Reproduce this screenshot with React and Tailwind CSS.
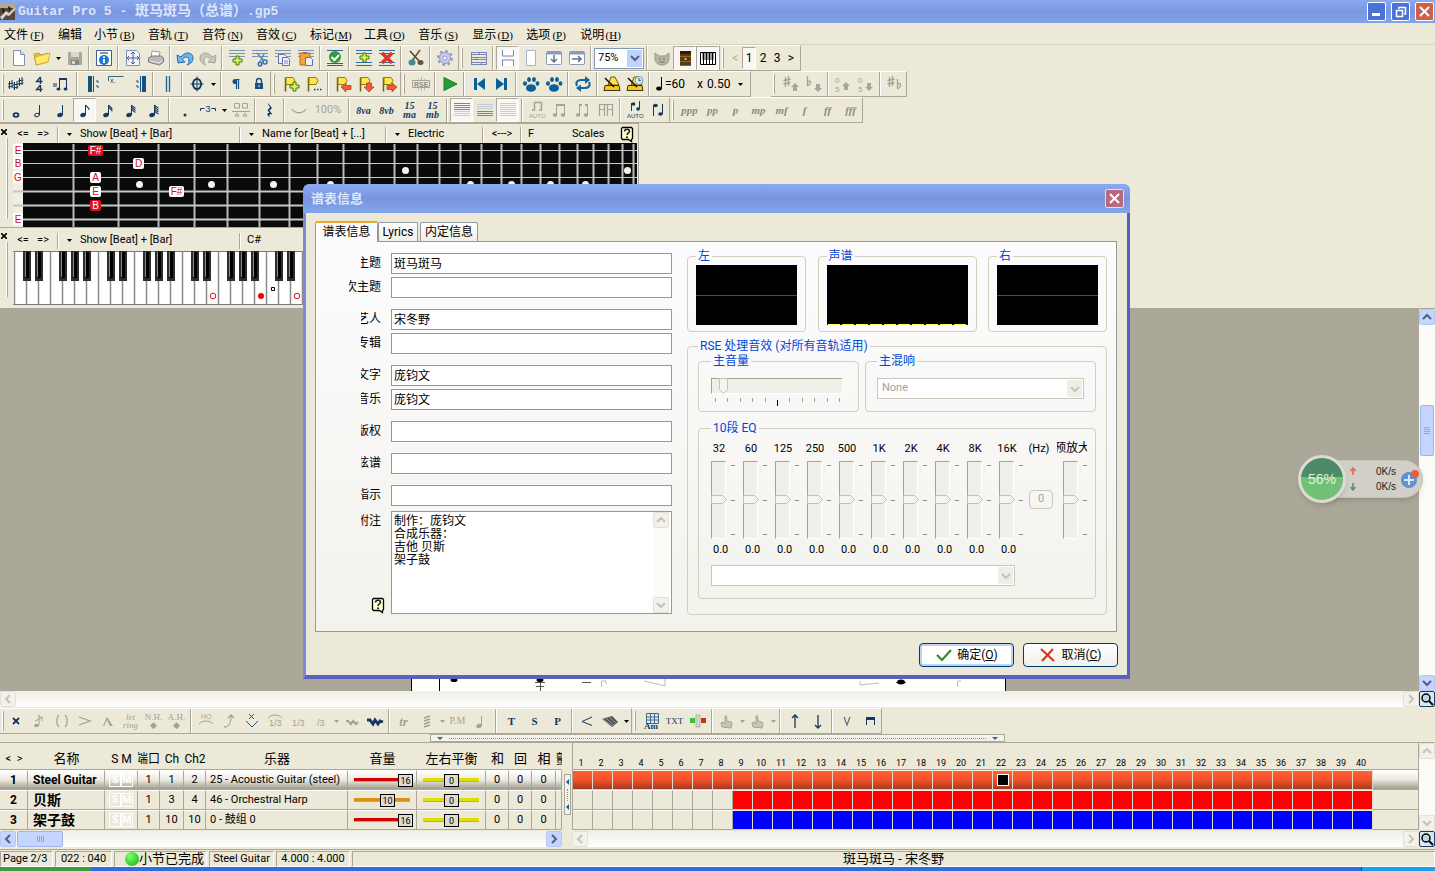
import React from "react";

const NAVY = "#12395f";
const GRAY = "#a5a294";

// ---------- toolbar icons ----------

function Svg({ children, w = 18, className = "" }) {
  return (
    <svg width={w} height="18" viewBox={`0 0 ${w} 18`} fill="none" className={className} aria-hidden="true">
      {children}
    </svg>
  );
}

const note = (flags, color = NAVY, hollow = false) => (
  <Svg>
    <ellipse cx="7" cy="14" rx="2.300" ry="1.700" transform="rotate(-20 7 14)" fill={hollow ? "none" : color} stroke={color} />
    <path d="M9.500 14V4" stroke={color} />
    {Array.from({ length: flags }, (_, i) => (
      <path key={i} d={`M9.500 ${4 + i * 2}c1 2 4 2.500 3.500 ${5.5 - flags * 0.6}`} stroke={color} strokeWidth="1.200" />
    ))}
  </Svg>
);

const beam = (color, top = "M5 3h9v2H5z") => (
  <Svg>
    <path d={top} fill={color} />
    <path d="M5.500 4v10M13.500 4v10" stroke={color} />
    <ellipse cx="4" cy="14" rx="2.200" ry="1.700" fill={color} />
    <ellipse cx="12" cy="14" rx="2.200" ry="1.700" fill={color} />
  </Svg>
);

const staff = (ys, color = "#7c93b5") => ys.map((y) => <path key={y} d={`M1 ${y}.5h16`} stroke={color} />);

const plus = (x, y) => (
  <path
    d={`M${x + 3} ${y}h3v3h3v3h-3v3h-3v-3h-3v-3h3z`}
    fill="#d9f25c"
    stroke="#3c7a12"
  />
);

const flag = (
  <>
    <path d="M3.500 16.500V2.500" stroke="#6b5f10" strokeWidth="1.500" />
    <path d="M4 2.500h7l2 3-2 4H4z" fill="#ffe94a" stroke="#8d7a10" />
  </>
);

const txt = (s, cls = "text-[#12395f]") => <span className={`font-['Liberation_Serif',serif] leading-none ${cls}`}>{s}</span>;
const dyn = (s) => txt(s, "text-[#8f8c80] text-[11px] font-bold italic");
const ital = (a, b) => (
  <span className="font-['Liberation_Serif',serif] text-[10px] font-bold italic leading-[9px] text-[#12395f] text-center">
    {a}
    {b && <br />}
    {b}
  </span>
);
const small = (a, b) => (
  <span className="font-['Liberation_Serif',serif] text-[9px] leading-[8px] text-[#a5a294] text-center">
    {a}
    <br />
    {b}
  </span>
);

const paw = (
  <Svg>
    <ellipse cx="9" cy="13" rx="5" ry="3.800" fill="#0b5f98" />
    <ellipse cx="3" cy="8.500" rx="2" ry="2.300" fill="#0b5f98" />
    <ellipse cx="7" cy="4.500" rx="1.900" ry="2.500" fill="#0b5f98" />
    <ellipse cx="12" cy="4.500" rx="1.900" ry="2.500" fill="#0b5f98" />
    <ellipse cx="15.500" cy="8.500" rx="1.900" ry="2.300" fill="#0b5f98" />
  </Svg>
);

const hand = (
  <Svg>
    <path d="M4 15l-1-4 2-1 2 2V4l1.500 0 .5 5 4 1 1 2-1 4z" fill="#c9c6b8" stroke={GRAY} />
  </Svg>
);

const metronome = (clock) => (
  <Svg>
    <path d="M5 10L8 2h4l4 8z" fill="#ffe14a" stroke="#6b5a08" />
    <path d="M2 10.500h14l1 5H1z" fill="#f6c81d" stroke="#3a3204" />
    <path d="M2 3l9 9" stroke="#111" strokeWidth="1.500" />
    {clock && <circle cx="13" cy="5.500" r="4" fill="#dcecf8" stroke="#6c93b4" />}
    {clock && <path d="M13 3v3l2-1" stroke="#356" />}
  </Svg>
);

const lines = (dark, light) => (
  <Svg>
    {staff(dark, "#6f86ad")}
    {staff(light, "#c8ccd4")}
  </Svg>
);

const windowIcon = (arrow) => (
  <Svg>
    <rect x="1.500" y="2.500" width="15" height="13" rx="1" fill="#fff" stroke="#8d98bd" />
    <path d="M2 4h14" stroke="#8d98bd" strokeWidth="3" />
    <path d={arrow} stroke="#5f7199" strokeWidth="1.500" />
  </Svg>
);

const barline = (side) => (
  <Svg>
    <path d={side === "l" ? "M4 1h4v16H4z" : "M12 1h4v16h-4z"} fill="#15517e" />
    <path d={side === "l" ? "M9.500 1v16M12 6h2v2M12 11h2v2" : "M10.500 1v16M6 6h2v2M6 11h2v2"} stroke="#15517e" />
  </Svg>
);

const rest = (
  <Svg>
    <path d="M7 2l4 5-2.500 2.500 3 4c-3-1-4.500 0-2 3-4-2-4-5-1-4.500L6.500 9 9 6.500 7 3z" fill={NAVY} />
  </Svg>
);

const SHARP = "M3.500 2v10M6.500 1v10M1.500 5.500l7-1.500M1.500 9l7-1.500";
const FLAT = "M2.500 1v10M2.500 7c3-2 5 0 0 4";

const shift = (sign, up) => (
  <Svg>
    <path d={sign} stroke={GRAY} strokeWidth="1.300" />
    <path d={up ? "M13 8l4 4h-2v4h-4v-4H9z" : "M13 17l4-4h-2V9h-4v4H9z"} fill="#aaa799" />
  </Svg>
);

const octave = (up) => (
  <Svg>
    <text x="1" y="8" fontSize="8" fill={GRAY} fontFamily="Liberation Sans">0</text>
    <text x="1" y="17" fontSize="8" fill={GRAY} fontFamily="Liberation Sans">5</text>
    <path d={up ? "M12 7l4 4h-2v4h-4v-4H8z" : "M12 16l4-4h-2V8h-4v4H8z"} fill="#aaa799" />
  </Svg>
);

const flagArrow = (d) => (
  <Svg>
    {flag}
    <path d={d} fill="#f25a3c" stroke="#b53018" strokeWidth=".7" />
  </Svg>
);

const icons = {
  new: <Svg><path d="M3.500 1.500h7l4 4v11h-11z" fill="#fff" stroke="#7d8fb8" /><path d="M10.500 1.500v4h4" stroke="#7d8fb8" fill="#dfe6f5" /></Svg>,
  open: <Svg><path d="M1 5l5-1 2 2 7-2v9L3 16z" fill="#e8c530" stroke="#b8962a" strokeWidth=".8" /><path d="M2 8l15-4-2 9-12 3z" fill="#ffe96b" stroke="#c7a52e" strokeWidth=".8" /></Svg>,
  save: <Svg><path d="M2 3h13l1 1v12H2z" fill="#aba99d" /><path d="M5 3h8v5H5z" fill="#dad8cc" /><path d="M5 11h8v5H5z" fill="#88867c" /><path d="M6 12h3v3H6z" fill="#dad8cc" /></Svg>,
  info: <Svg><path d="M1.500 1.500h15v15h-15z" fill="#fff" stroke="#3b5f96" /><path d="M5 4h8" stroke="#222" /><circle cx="9" cy="11" r="5" fill="#1677d8" /><path d="M9 10v4M9 7.500v1.500" stroke="#fff" strokeWidth="2" /></Svg>,
  move: <Svg><path d="M2.500 1.500h10l3 3v12h-13z" fill="#f4f6fc" stroke="#7d8fb8" /><path d="M9 4v10M4 9h10M7 5l2-2 2 2M7 13l2 2 2-2M5 7L3 9l2 2M13 7l2 2-2 2" stroke="#48628f" /></Svg>,
  print: <Svg><path d="M5 2l8 1-1 6H4z" fill="#fff" stroke="#999" /><path d="M1.500 9l4-2h9l2 2v4l-4 3-11-3z" fill="#b8b9c0" stroke="#77787e" /><path d="M3 12l9 2 3-2" stroke="#eee" /></Svg>,
  undo: <Svg><path d="M1 6l1 8 7-1-2.500-2.500C9 7 13 7 13 12c0 2-1 3-2 4 4-1 6-4 6-7 0-6-8-7-12-1z" fill="#6fb2ee" stroke="#1f6db4" /></Svg>,
  redo: <Svg><path d="M17 6l-1 8-7-1 2.500-2.500C9 7 5 7 5 12c0 2 1 3 2 4-4-1-6-4-6-7 0-6 8-7 12-1z" fill="#c9c7bb" stroke="#a9a79b" /></Svg>,
  addBar: <Svg>{staff([1, 4, 7])}{plus(5, 7)}</Svg>,
  cutBar: <Svg>{staff([1, 4, 7])}<path d="M6 4l7 8M13 5l-4 8" stroke="#5a89c4" strokeWidth="1.500" /><circle cx="14" cy="13" r="2" stroke="#2f6db5" strokeWidth="1.500" /><circle cx="9" cy="15" r="1.800" stroke="#2f6db5" strokeWidth="1.500" /></Svg>,
  copyBar: <Svg>{staff([1, 4, 7])}<path d="M4.500 5.500h6l2 2v7h-8z" fill="#eef1fa" stroke="#5f70ab" /><path d="M8.500 8.500h5l2 2v6h-7z" fill="#eef1fa" stroke="#5f70ab" /><path d="M10 12h4M10 14h4" stroke="#7b8cc0" /></Svg>,
  pasteBar: <Svg>{staff([1, 4, 7])}<path d="M3 4h10v12H3z" fill="#f2a040" stroke="#c06f17" /><path d="M6 3h4v2H6z" fill="#777" /><path d="M8.500 8.500h5l2 2v6h-7z" fill="#eef1fa" stroke="#5f70ab" /></Svg>,
  check: <Svg>{staff([1, 14, 16], "#2b5e9e")}<circle cx="9" cy="8" r="6" fill="#2f9b3a" /><path d="M5.500 8l3 3 4.500-5" stroke="#fff" strokeWidth="2" /></Svg>,
  insTrack: <Svg>{staff([1, 4, 13, 16], "#2f6ca4")}{plus(5, 4)}</Svg>,
  delTrack: <Svg>{staff([1, 4, 13, 16], "#2f6ca4")}<path d="M4 4l10 10M14 4L4 14" stroke="#df3324" strokeWidth="3.500" /></Svg>,
  instr: <Svg><path d="M3 2l10 11" stroke="#444" strokeWidth="1.500" /><path d="M13 1L5 12" stroke="#6b4a38" strokeWidth="1.500" /><ellipse cx="5" cy="13.500" rx="3.500" ry="3" fill="#3f8d96" /><ellipse cx="13.500" cy="13.500" rx="3" ry="2.500" fill="#6a5045" /></Svg>,
  gear: <Svg><circle cx="9" cy="9" r="5.500" fill="#c6cdea" stroke="#8d98c9" /><circle cx="9" cy="9" r="7" stroke="#8d98c9" strokeWidth="2" strokeDasharray="2.700 2.800" /><circle cx="9" cy="9" r="2" fill="#fff" stroke="#8d98c9" /></Svg>,
  multi: <Svg>{staff([3, 5, 8, 10, 13, 15], "#7787b4")}<path d="M1.500 3v13M16.500 3v13M9.500 3v3M6.500 8v3M11.500 13v3" stroke="#7787b4" /></Svg>,
  pages: <Svg><path d="M3.500 1v6h11V1M3.500 17v-6h11v6" fill="#fff" stroke="#7787b4" /></Svg>,
  page: <Svg><path d="M4.500 1.500h9v15h-9z" fill="#fff" stroke="#a6b0cf" /></Svg>,
  winDown: windowIcon("M9 6v7M6 10l3 3 3-3"),
  winRight: windowIcon("M4 10h9M10 7l3 3-3 3"),
  mask: <Svg><path d="M2 4l4 3h6l4-3v6c0 8-14 8-14 0z" fill="#b9b6a8" stroke="#9b988b" /><path d="M6 10h2M10 10h2M6 13h6" stroke="#77756a" /></Svg>,
  fret: <Svg><path d="M4 2h11v15H4z" fill="#5b3a12" /><path d="M4 7.500h11M4 12.500h11M4 16.500h11" stroke="#8f6524" /><path d="M4 2h11v3H4z" fill="#2f1c06" /><circle cx="9.500" cy="10" r="1" fill="#e6d9b0" /></Svg>,
  keys: <Svg><path d="M1.500 3.500h15v12h-15z" fill="#fff" stroke="#000" /><path d="M4.500 11v4M7.500 11v4M10.500 11v4M13.500 11v4" stroke="#000" /><path d="M4.500 4v7M7.500 4v7M10.500 4v7M13.500 4v7" stroke="#000" strokeWidth="1.800" /></Svg>,

  sharps: <Svg>{[[1, 6], [6, 7], [11, 3]].map(([x, y]) => <path key={x} d={`M${x + 1.5} ${y}v8M${x + 4} ${y - 1}v8M${x} ${y + 3}l5.500-1M${x} ${y + 6}l5.500-1`} stroke={NAVY} />)}</Svg>,
  sig: <Svg><path d="M10.500 2v7M10.500 2L6.500 6.500h6M10.500 10v7M10.500 10l-4 4.500h6" stroke={NAVY} strokeWidth="1.300" /></Svg>,
  triplet: <Svg><path d="M0 9h4M0 11h4" stroke={NAVY} /><path d="M6 3h8v2H6z" fill={NAVY} /><path d="M6.500 4v10M13.500 4v10" stroke={NAVY} /><ellipse cx="5.500" cy="14" rx="2" ry="1.600" fill={NAVY} /><ellipse cx="12.500" cy="14" rx="2" ry="1.600" fill={NAVY} /></Svg>,
  repL: barline("l"),
  alt: <Svg><path d="M1.500 6V1.500h15" stroke="#2a6a72" /><text x="3" y="8" fontSize="7" fill={NAVY} fontFamily="Liberation Sans">x.</text></Svg>,
  repR: barline("r"),
  dbl: <Svg><path d="M7.500 1v16M10.500 1v16" stroke="#15629a" strokeWidth="1.300" /></Svg>,
  coda: <Svg><ellipse cx="9" cy="9" rx="4" ry="5" stroke={NAVY} strokeWidth="2" /><path d="M9 1.500v15M2.500 9h13" stroke={NAVY} /></Svg>,
  para: <Svg><path d="M12.500 4.500H8M9.500 5v9M11.500 5v9" stroke="#15517e" strokeWidth="1.200" /><path d="M8 4a2.500 2.500 0 000 5h2V4z" fill="#15517e" /></Svg>,
  lock: <Svg><rect x="5" y="8" width="8" height="6" fill="#15517e" /><path d="M6.500 8V6a2.500 2.500 0 015 0v2" stroke="#15517e" strokeWidth="1.400" /><path d="M9 10v2" stroke="#fff" /></Svg>,
  flagAdd: <Svg>{flag}{plus(8, 7)}</Svg>,
  flagDots: <Svg>{flag}<path d="M9 14.500h1.500M12 14.500h1.500M15 14.500h1.500" stroke="#333" strokeWidth="1.500" /></Svg>,
  flagL: flagArrow("M7 12l5-4v2.500h5v4h-5V17z"),
  flagD: flagArrow("M12 17l-5-5h2.500V8h5v4H17z"),
  flagR: flagArrow("M17 12l-5-4v2.500H7v4h5V17z"),
  rse: <Svg><path d="M9.500 2v14M6.500 4v11M12.500 4v11M3.500 6v7M15.500 6v7" stroke="#b9b6a8" /><path d="M.5 5.500h17v7H.5z" fill="#ece9d8" stroke={GRAY} /><text x="2" y="11.500" fontSize="7" fontWeight="bold" fill="#8f8c80" fontFamily="Liberation Sans">RSE</text></Svg>,
  play: <Svg><path d="M3 2.500v13L16 9z" fill="#259b35" stroke="#1a7a28" /></Svg>,
  first: <Svg><path d="M4 3h3v12H4zM15 3v12L7 9z" fill="#0b5f98" /></Svg>,
  last: <Svg><path d="M11 3h3v12h-3zM3 3v12l8-6z" fill="#0b5f98" /></Svg>,
  paw,
  paw2: paw,
  loop: <Svg><path d="M3 11c-2-4 1-6 4-6h6M15 7c2 4-1 6-4 6H5" stroke="#16649f" strokeWidth="2" /><path d="M11 1l5 4-5 4zM7 9.500L2 13l5 4z" fill="#16649f" /></Svg>,
  metro: metronome(false),
  metro2: metronome(true),
  upS: shift(SHARP, true),
  dnB: shift(FLAT, false),
  oct1: octave(true),
  oct2: octave(false),
  shfl: <Svg><path d={SHARP} stroke={GRAY} strokeWidth="1.300" /><path d="M11.500 4v10M11.500 9c3-2 5 1 0 5" stroke={GRAY} strokeWidth="1.300" /></Svg>,

  whole: <Svg><ellipse cx="9" cy="14" rx="2.500" ry="1.800" stroke={NAVY} strokeWidth="1.800" /></Svg>,
  half: note(0, NAVY, true),
  quarter: note(0),
  eighth: note(1),
  n16: note(2),
  n32: note(3),
  n64: note(4),
  dot: <Svg><circle cx="9" cy="14" r="1.500" fill={NAVY} /></Svg>,
  tri: <Svg><path d="M1.500 10V7.500h4M12.500 7.500h4V10" stroke={NAVY} /><text x="6.500" y="11" fontSize="9" fill={NAVY} fontFamily="Liberation Sans">3</text></Svg>,
  tie3: <Svg><path d="M2.500 7V2.500h5V7zM10.500 7V2.500h5V7zM0 10.500h18M3 15l2-3 2 3zM11 15l2-3 2 3z" stroke={GRAY} /></Svg>,
  rest,
  slur: <Svg><path d="M2 8c3 5 11 5 14 0" stroke={GRAY} strokeWidth="1.300" /></Svg>,
  "8va": ital("8va"),
  "8vb": ital("8vb"),
  "15ma": ital("15", "ma"),
  "15mb": ital("15", "mb"),
  v1: lines([2, 4, 6, 8], [10, 12, 14]),
  v2: lines([10, 12, 14], [3, 5, 7]),
  v3: lines([], [2, 4, 6, 8, 10, 12, 14]),
  beamA: <Svg><path d="M6 1.500h8M6.500 2v7M13.500 2v7M4 9h3M11 9h3" stroke={GRAY} strokeWidth="1.500" /><text x="1" y="17" fontSize="6" fill={GRAY} fontFamily="Liberation Sans">AUTO</text></Svg>,
  beamB: beam(GRAY),
  beamC: beam(GRAY, "M5 3h3v2H5zM11 3h3v2h-3z"),
  beamD: <Svg><path d="M2 3.500h14M2.500 3v12M7.500 3v12M10.500 3v12M15.500 3v12M2 8.500h6M10 8.500h6" stroke={GRAY} strokeWidth="1.200" /></Svg>,
  stemA: <Svg><path d="M5.500 2v8M13.500 0v8M5.500 2.500h3" stroke={NAVY} /><circle cx="7.500" cy="3" r="1.800" fill={NAVY} /><circle cx="12" cy="8" r="1.800" fill={NAVY} /><text x="1" y="17" fontSize="6" fill={NAVY} fontFamily="Liberation Sans">AUTO</text></Svg>,
  stemB: <Svg><path d="M4.500 4v11M13.500 3v10" stroke={NAVY} /><ellipse cx="6.500" cy="4.500" rx="2.300" ry="1.700" fill={NAVY} /><ellipse cx="11.500" cy="13" rx="2.300" ry="1.700" fill={NAVY} /></Svg>,
  ppp: dyn("ppp"), pp: dyn("pp"), p: dyn("p"), mp: dyn("mp"), mf: dyn("mf"), f: dyn("f"), ff: dyn("ff"), fff: dyn("fff"),

  dead: <Svg><path d="M6 6l6 6M12 6l-6 6" stroke={NAVY} strokeWidth="1.800" /></Svg>,
  grace: <Svg><ellipse cx="6.500" cy="13.500" rx="2.500" ry="1.800" fill={GRAY} /><path d="M9 13V3c1 3 4 3 3 6M5 9l8-4" stroke={GRAY} /></Svg>,
  ghost: <Svg><path d="M6 3c-3 3-3 9 0 12M12 3c3 3 3 9 0 12" stroke={GRAY} strokeWidth="1.300" /></Svg>,
  accent: <Svg><path d="M3 5l11 4-11 4" stroke={GRAY} strokeWidth="1.300" /></Svg>,
  heavy: <Svg><path d="M4 14L8 5l6 9h-3L8 8l-3 6z" fill={GRAY} /></Svg>,
  ring: <span className="font-['Liberation_Serif',serif] text-[9px] italic leading-[8px] text-[#a5a294] text-center">let<br />ring</span>,
  nh: small("N.H.", "◆"),
  ah: small("A.H.", "◆"),
  ho: <Svg><text x="4" y="7" fontSize="7" fill={GRAY} fontFamily="Liberation Sans">HO</text><path d="M2 12c3-4 11-4 14 0" stroke={GRAY} /></Svg>,
  bend: <Svg><path d="M4 15c5 0 7-3 7-11M8 6l3-3 3 3" stroke={GRAY} strokeWidth="1.300" /></Svg>,
  trem: <Svg><path d="M3 9l6 6 6-6M6 2l5 5M11 2L6 7" stroke="#1d5687" /></Svg>,
  sl1: <Svg><path d="M2 6c3-4 11-4 14 0" stroke={GRAY} /><text x="3" y="14" fontSize="9" fill={GRAY} fontFamily="Liberation Sans">1/3</text></Svg>,
  sl2: <Svg><text x="3" y="14" fontSize="9" fill={GRAY} fontFamily="Liberation Sans">1/3</text></Svg>,
  sl3: <Svg><text x="5" y="14" fontSize="9" fill={GRAY} fontFamily="Liberation Sans">/3</text></Svg>,
  vib: <Svg><path d="M3 9l2 0 3 3 2-3 3 3 2-2" stroke={GRAY} strokeWidth="2.200" /></Svg>,
  vib2: <Svg><path d="M1 8l3 0 3 4 2-4 3 4 2-3 3 1" stroke={NAVY} strokeWidth="2.800" /></Svg>,
  tr: txt("tr", "text-[#a5a294] text-[13px] font-bold italic"),
  trpk: <Svg><path d="M6 6l6-2M6 9l6-2M6 12l6-2M6 15l6-2" stroke={GRAY} strokeWidth="1.800" /></Svg>,
  pm: txt("P.M", "text-[#a5a294] text-[10px]"),
  stac: note(0, GRAY),
  T: txt("T", "text-[#12395f] text-[11px] font-bold"),
  S: txt("S", "text-[#12395f] text-[11px] font-bold"),
  P: txt("P", "text-[#12395f] text-[11px] font-bold"),
  fade: <Svg><path d="M14 5L4 9.500l10 4" stroke={NAVY} /></Svg>,
  wah: <Svg><path d="M1 7l10-3 6 6-6 5z" fill="#4c5058" /><path d="M2 7l9 7M5 6l8 7M8 5l7 6" stroke="#9a9fa8" /></Svg>,
  chord: <Svg><path d="M3.500 1.500h12v10h-12zM3 5h13M3 8h13M7.500 2v9M11.500 2v9" stroke="#3c6a97" /><text x="1" y="17" fontSize="9" fontWeight="bold" fill={NAVY} fontFamily="Liberation Serif">Am</text></Svg>,
  TXT: txt("TXT", "text-[#12395f] text-[9px]"),
  mix: <Svg><path d="M1 6h5v5H1z" fill="#35c435" /><path d="M12 6h5v5h-5z" fill="#c33418" /><path d="M7 3h4v12H7z" fill="#d9d6c8" stroke="#999" strokeWidth=".6" /></Svg>,
  hand1: hand,
  hand2: hand,
  up: <Svg><path d="M9 16V3M6 6l3-3 3 3" stroke={NAVY} strokeWidth="1.300" /></Svg>,
  down: <Svg><path d="M9 3v13M6 13l3 3 3-3" stroke={NAVY} strokeWidth="1.300" /></Svg>,
  pickU: <Svg><path d="M6 5l3 8 3-8" stroke="#54708c" strokeWidth="1.200" /></Svg>,
  pickD: <Svg><path d="M5.500 13V6h8v7" stroke={NAVY} /><path d="M5 5h9v3H5z" fill={NAVY} /></Svg>,
};

function Caret({ gray }) {
  return (
    <svg width="5" height="3" viewBox="0 0 5 3" aria-hidden="true">
      <path d="M0 0h5L2.500 3z" fill={gray ? GRAY : "#000"} />
    </svg>
  );
}

// "|" and "||" are separators, "v" / "vg" drop-down carets, "*name" a pressed button
function Items({ list }) {
  return list.map((item, i) => {
    if (item === "|" || item === "||") {
      return (
        <span key={i} className={`flex h-6 justify-center ${item === "|" ? "w-1.5" : "w-2"}`}>
          <span className="h-full w-0.5 border-l border-[#aca899] bg-white" />
        </span>
      );
    }
    if (item === "v" || item === "vg") {
      return (
        <button key={i} aria-label="more" className={`flex h-6 items-center justify-center ${item === "v" ? "w-2.5" : "w-2"}`}>
          <Caret gray={item === "vg"} />
        </button>
      );
    }
    const active = item[0] === "*";
    const name = active ? item.slice(1) : item;
    return (
      <button
        key={i}
        aria-label={name}
        className={`flex h-6 w-[23px] items-center justify-center ${active ? "border border-[#aca899] border-r-white border-b-white bg-[#f8f7f3]" : ""}`}
      >
        {icons[name]}
      </button>
    );
  });
}

function Toolbar({ children, className = "pl-1" }) {
  return (
    <div className={`relative flex h-[26px] items-center border-t border-r border-b border-t-white border-r-[#aca899] border-b-[#aca899] ${className}`}>
      <span className="absolute top-0.5 bottom-0.5 left-0.5 w-0.5 border-r border-[#aca899] bg-white" />
      {children}
    </div>
  );
}

// ---------- common bits ----------

function Chevron({ dir = "down", color = "#4d6185" }) {
  const d = { down: "M1 3l4 4 4-4", up: "M1 7l4-4 4 4", left: "M7 1L3 5l4 4", right: "M3 1l4 4-4 4" }[dir];
  return (
    <svg width="10" height="10" viewBox="0 0 10 10" fill="none" aria-hidden="true">
      <path d={d} stroke={color} strokeWidth="2" />
    </svg>
  );
}

function ScrollButton({ dir, disabled }) {
  return (
    <button
      aria-label={`scroll ${dir}`}
      disabled={disabled}
      className={`flex h-4 w-4 shrink-0 items-center justify-center rounded-xs border ${
        disabled ? "border-[#e3e1d6] bg-[#f2f1ea]" : "border-[#b4c7f5] bg-[#c6d5fd]"
      }`}
    >
      <Chevron dir={dir} color={disabled ? "#c6c4b8" : "#4d6185"} />
    </button>
  );
}

function VScroll({ disabled, children }) {
  return (
    <div className="flex w-4 shrink-0 flex-col bg-[#fbfbf8]">
      <ScrollButton dir="up" disabled={disabled} />
      <div className="flex-1">{children}</div>
      <ScrollButton dir="down" disabled={disabled} />
    </div>
  );
}

function HScroll({ disabled, className = "", children }) {
  return (
    <div className={`flex h-4 bg-linear-to-b from-[#f0efe8] to-[#fefefc] ${className}`}>
      <ScrollButton dir="left" disabled={disabled} />
      <div className="flex-1">{children}</div>
      <ScrollButton dir="right" disabled={disabled} />
    </div>
  );
}

function ZoomButton() {
  return (
    <button aria-label="zoom" className="flex h-4 w-4 items-center justify-center rounded-xs border border-[#1c3e63] bg-[#dce8ef]">
      <svg width="14" height="14" viewBox="0 0 14 14" fill="none" aria-hidden="true">
        <circle cx="6" cy="6" r="4" fill="#b8dbe4" stroke="#000" strokeWidth="1.500" />
        <path d="M9 9l4 4" stroke="#000" strokeWidth="2" />
      </svg>
    </button>
  );
}

function HelpIcon() {
  return (
    <svg width="14" height="17" viewBox="0 0 14 17" aria-hidden="true">
      <path d="M2.500 1.500h9l1 1v10l-1 1v2l-3-2h-6l-1-1v-10z" fill="#ffffcf" stroke="#000" strokeWidth="1.300" />
      <path d="M4.500 5.500c0-3 5-3 5 0 0 1.500-2.500 1.500-2.500 3.500" fill="none" stroke="#123" strokeWidth="1.500" />
      <path d="M6 10.500h2v1.500H6z" fill="#123" />
    </svg>
  );
}

function Line() {
  return <span className="h-4 w-0.5 border-l border-[#aca899] bg-white" />;
}

// ---------- top of the window ----------

function TitleBar() {
  return (
    <header className="flex h-[23px] items-center bg-linear-to-b from-[#8aaaf0] via-[#7a96e0] to-[#82a4e8]">
      <svg width="15" height="17" viewBox="0 0 15 17" aria-hidden="true">
        <path d="M0 0h15v17H0z" fill="#57463a" />
        <path d="M0 0h15v5H0z" fill="#b8a690" />
        <path d="M0 14l6-6 3 2 6-6v3l-6 6-3-1-4 5z" fill="#d8d2c8" />
        <path d="M2 5l3 2-2 4zM8 3l3 2-2 3z" fill="#1c1410" />
      </svg>
      <h1 className="ml-[3px] flex-1 font-['Liberation_Mono','Noto_Sans_CJK_SC',monospace] text-[13px] leading-4 font-bold text-[#dbe6fb]">
        Guitar Pro 5 - <span className="text-[14px]">斑马斑马（总谱）</span>.gp5
      </h1>
      <div className="flex gap-[5px] pr-px">
        <button aria-label="minimize" className="flex h-[19px] w-[19px] items-end rounded-xs border border-white bg-[#4a72d8] pb-1 pl-1">
          <span className="h-[3px] w-2 bg-white" />
        </button>
        <button aria-label="restore" className="flex h-[19px] w-[19px] items-center justify-center rounded-xs border border-white bg-[#4a72d8]">
          <svg width="12" height="12" viewBox="0 0 12 12" fill="none" aria-hidden="true">
            <path d="M4 3V1.500h6.500V8H9M1.500 4.500h6v6h-6z" stroke="#fff" strokeWidth="1.500" />
          </svg>
        </button>
        <button aria-label="close" className="flex h-[19px] w-[19px] items-center justify-center rounded-xs border border-white bg-[#d0604a]">
          <CloseMark />
        </button>
      </div>
    </header>
  );
}

function CloseMark() {
  return (
    <svg width="11" height="11" viewBox="0 0 11 11" aria-hidden="true">
      <path d="M1 1l9 9M10 1l-9 9" stroke="#fff" strokeWidth="2" />
    </svg>
  );
}

const menus = [
  ["文件", "F"], ["编辑"], ["小节", "B"], ["音轨", "T"], ["音符", "N"], ["音效", "C"],
  ["标记", "M"], ["工具", "O"], ["音乐", "S"], ["显示", "D"], ["选项", "P"], ["说明", "H"],
];

function MenuBar() {
  return (
    <nav className="flex h-[22px] items-center gap-3 border-b border-[#d6d2c2] pt-0.5 pl-1">
      {menus.map(([label, key]) => (
        <button key={label} className="whitespace-nowrap text-[12px] leading-4">
          {label}
          {key && (
            <span className="inline-block w-[18px] text-center font-['Liberation_Serif',serif] text-[11px]">
              (<u>{key}</u>)
            </span>
          )}
        </button>
      ))}
    </nav>
  );
}

function Toolbars() {
  return (
    <>
      <div className="flex">
        <Toolbar className="pr-0.5 pl-[7px]">
          <Items list={["new", "open", "v", "save", "|", "info", "|", "move", "print", "|", "undo", "redo", "|", "addBar", "cutBar", "copyBar", "pasteBar", "|", "check", "|", "insTrack", "delTrack", "|", "instr", "|", "gear"]} />
        </Toolbar>
        <Toolbar className="pl-2">
          <Items list={["multi", "|", "*pages", "page", "winDown", "winRight", "|"]} />
          <div className="relative h-[21px] w-[50px]">
            <select aria-label="zoom level" defaultValue="75" className="block h-full w-full appearance-none border border-[#7f9db9] bg-white py-0 pl-[3px] text-[11px] leading-4">
              <option value="75">75%</option>
              <option value="100">100%</option>
            </select>
            <span className="pointer-events-none absolute top-0.5 right-0.5 flex h-[17px] w-[15px] items-center justify-center bg-[#c1d2fb]">
              <Chevron />
            </span>
          </div>
          <Items list={["|", "mask", "*fret", "*keys"]} />
        </Toolbar>
        <Toolbar className="pl-2">
          {["<", "1", "2", "3", ">"].map((p) => (
            <button
              key={p}
              className={`h-[22px] w-3.5 text-[12px] ${p === "1" ? "border border-[#aca899] border-r-white border-b-white bg-[#f8f7f3]" : ""} ${p === "<" ? "text-[#aca899]" : ""}`}
            >
              {p}
            </button>
          ))}
          <span className="w-0.5" />
        </Toolbar>
      </div>
      <div className="flex">
        <Toolbar>
          <Items list={["sharps", "sig", "triplet", "||", "repL", "alt", "repR", "|", "dbl", "|", "coda", "v", "|", "para", "lock"]} />
        </Toolbar>
        <Toolbar className="pl-2">
          <Items list={["flagAdd", "flagDots", "|", "flagL", "flagD", "flagR"]} />
        </Toolbar>
        <Toolbar className="pl-2">
          <Items list={["rse", "|", "play", "|", "first", "last", "|", "paw", "paw2", "|", "loop", "|", "metro", "metro2", "|"]} />
          <button className="flex h-6 w-[98px] items-center gap-1 pl-1 text-[12px]">
            <svg width="7" height="14" viewBox="0 0 7 14" aria-hidden="true">
              <ellipse cx="3" cy="11.500" rx="2.800" ry="2" />
              <path d="M5.500 0v12" stroke="#000" />
            </svg>
            <span className="-ml-0.5">=60</span>
            <span className="ml-2">x</span>
            <span className="mr-1">0.50</span>
            <Caret />
          </button>
        </Toolbar>
        <span className="w-5" />
        <Toolbar className="pl-2">
          <Items list={["upS", "dnB", "|", "oct1", "oct2", "|", "shfl"]} />
        </Toolbar>
      </div>
      <div className="flex">
        <Toolbar>
          <Items list={["whole", "half", "quarter", "*eighth", "n16", "n32", "n64", "||", "dot", "tri", "v", "tie3", "|", "rest", "|", "slur"]} />
          <button className="h-6 w-9 text-[11px] text-[#a5a294]">100%</button>
          <Items list={["|", "8va", "8vb", "15ma", "15mb", "|", "*v1", "v2", "*v3", "|", "beamA", "beamB", "beamC", "beamD", "|", "stemA", "stemB"]} />
        </Toolbar>
        <Toolbar className="pl-2">
          <Items list={["ppp", "pp", "p", "mp", "mf", "f", "ff", "fff"]} />
        </Toolbar>
      </div>
    </>
  );
}

// ---------- fretboard and keyboard ----------

const frets = [60, 105, 145, 181, 214, 246, 276, 304, 330, 356, 381, 404, 426, 447, 468, 488, 508, 527, 546, 564, 580, 595, 609, 620];
const strings = [7, 20, 34, 48, 62, 76];
const inlays = [[126, 41], [198, 41], [260, 41], [317, 41], [392, 27], [392, 55], [457, 41], [498, 41], [537, 41], [572, 41], [614, 27], [614, 55]];
const openNotes = [["E", 7], ["B", 20], ["G", 34], ["E", 76]];
const notes = [
  ["F#", 82, 7, true], ["D", 125, 20], ["A", 82, 34], ["E", 82, 48], ["F#", 163, 48], ["B", 82, 62, true],
];

function Fretboard() {
  return (
    <svg width="624" height="84" viewBox="0 0 624 84" className="block font-['Liberation_Sans',sans-serif] text-[10px]" aria-label="fretboard">
      <path d="M0 0h624v84H0z" fill="#0a0a0a" />
      <path d="M0 0h10v84H0z" fill="#f0eee0" />
      {frets.map((x) => (
        <path key={x} d={`M${x}.5 1v83`} stroke="#b9b9b9" strokeWidth="2" />
      ))}
      {inlays.map(([x, y]) => (
        <circle key={`${x}-${y}`} cx={x + 0.5} cy={y + 0.5} r="3.500" fill="#f4f4ec" />
      ))}
      {strings.map((y, i) => (
        <path key={y} d={`M0 ${y}.5h624`} stroke="#c4c8c6" strokeWidth={i > 2 ? 2 : 1} />
      ))}
      {openNotes.map(([n, y]) => (
        <g key={y}>
          <path d={`M0 ${y - 6}h10v12H0z`} fill="#fff" />
          <text x="5" y={y + 4} textAnchor="middle" fill="#c8102e">{n}</text>
        </g>
      ))}
      {notes.map(([n, x, y, on]) => {
        const half = n.length > 1 ? 7 : 5;
        return (
          <g key={`${x}-${y}`}>
            <rect x={x - half} y={y - 5} width={half * 2 + 1} height="11" rx="2" fill={on ? "#e01020" : "#fff"} />
            <text x={x + 0.5} y={y + 4} textAnchor="middle" fill={on ? "#fff" : "#c8102e"}>{n}</text>
          </g>
        );
      })}
    </svg>
  );
}

function Keyboard() {
  // 52 white keys, a black key sits on every boundary except B/C and E/F
  const whites = Array.from({ length: 52 }, (_, i) => i);
  const hasBlack = (i) => [1, 2, 4, 5, 6].includes(i % 7);
  return (
    <svg width="624" height="54" viewBox="0 0 624 54" className="block" aria-label="keyboard">
      <path d="M0 0h624v54H0z" fill="#fff" />
      <path d="M0 53.500h624M0 .5h624" stroke="#777" />
      {whites.map((i) => (
        <path key={i} d={`M${i * 12 + 1}.5 0v54`} stroke="#8a8a8a" strokeWidth="1.500" />
      ))}
      {whites.filter(hasBlack).map((i) => (
        <g key={i}>
          <path d={`M${i * 12 - 2} 0h8v30h-8z`} fill="#2c2c2c" />
          <path d={`M${i * 12} 1h4v26h-4z`} fill="#000" />
          <path d={`M${i * 12 + 0.5} 1v25`} stroke="#888" />
        </g>
      ))}
      <circle cx="200" cy="45" r="2.800" fill="none" stroke="#d01020" />
      <circle cx="248" cy="45" r="3" fill="#e00" />
      <circle cx="284" cy="45" r="2.800" fill="none" stroke="#d01020" />
      <path d="M258.500 36.500h3v3h-3z" fill="none" stroke="#000" />
    </svg>
  );
}

function DockPanel({ header, tall, children }) {
  return (
    <section className="flex border-t border-[#aca899]">
      <div className="flex w-[13px] flex-col items-center gap-0.5">
        <button aria-label="close panel" className="mt-1 mr-1 h-2 w-2">
          <svg width="6" height="6" viewBox="0 0 6 6" aria-hidden="true">
            <path d="M0 0l6 6M6 0L0 6" stroke="#000" strokeWidth="1.600" />
          </svg>
        </button>
        <span className="mb-2 w-0.5 flex-1 border-r border-[#aca899] bg-white" />
      </div>
      <div>
        <div className={`flex items-center pt-0.5 text-[11px] ${tall ? "h-[23px]" : "h-[19px]"}`}>{header}</div>
        {children}
      </div>
    </section>
  );
}

function NavArrows() {
  return (
    <>
      <button className="w-5">&lt;=</button>
      <button className="mr-1 w-5">=&gt;</button>
    </>
  );
}

function Pick({ label, className }) {
  return (
    <>
      <Line />
      <button className={`flex items-center gap-2 pl-2 whitespace-nowrap ${className}`}>
        <Caret />
        {label}
      </button>
    </>
  );
}

function InstrumentPanels() {
  return (
    <div className="flex h-[185px] w-[639px] flex-col border-r border-[#aca899]">
      <DockPanel
        header={
          <>
            <NavArrows />
            <Pick label="Show [Beat] + [Bar]" className="w-[180px] pr-2" />
            <Pick label="Name for [Beat] + [...]" className="w-36" />
            <Pick label="Electric" className="w-[95px]" />
            <Line />
            <button className="w-9">&lt;---&gt;</button>
            <Line />
            <span className="w-[50px] pl-1.5">F</span>
            <button className="mr-4">Scales</button>
            <HelpIcon />
          </>
        }
      >
        <Fretboard />
      </DockPanel>
      <DockPanel
        tall
        header={
          <>
            <NavArrows />
            <Pick label="Show [Beat] + [Bar]" className="w-[180px] pr-2" />
            <Line />
            <span className="pl-1.5">C#</span>
          </>
        }
      >
        <Keyboard />
      </DockPanel>
    </div>
  );
}

// ---------- score information window ----------

const fields = [
  { id: "title", label: "主题", value: "斑马斑马" },
  { id: "subtitle", label: "次主题", value: "", wide: true },
  { id: "artist", label: "艺人", value: "宋冬野", gap: true },
  { id: "album", label: "专辑", value: "" },
  { id: "words", label: "文字", value: "庞钧文", gap: true },
  { id: "music", label: "音乐", value: "庞钧文" },
  { id: "copyright", label: "版权", value: "", gap: true },
  { id: "tab", label: "弦谱", value: "", gap: true },
  { id: "instructions", label: "指示", value: "", gap: true },
];

const memo = "制作：庞钧文\n合成乐器：\n吉他 贝斯\n架子鼓";

function FieldLabel({ htmlFor, wide, children }) {
  return (
    <label htmlFor={htmlFor} className={`flex justify-end overflow-hidden whitespace-nowrap ${wide ? "w-8" : "w-5"}`}>
      {children}
    </label>
  );
}

function InfoForm() {
  return (
    <div className="w-[356px] shrink-0 pt-2">
      {fields.map((f) => (
        <div key={f.id} className={`flex ${f.gap ? "mt-[11px]" : "mt-[3px]"}`}>
          <div className="flex w-[65px] justify-end leading-5">
            <FieldLabel htmlFor={f.id} wide={f.wide}>{f.label}</FieldLabel>
          </div>
          <input id={f.id} type="text" defaultValue={f.value} className="ml-2.5 h-[21px] min-w-0 flex-1 border border-[#7f9db9] bg-white px-0.5 pb-0.5 text-[12px]" />
        </div>
      ))}
      <div className="mt-[5px] flex">
        <div className="flex w-[65px] flex-col items-end justify-between leading-5">
          <FieldLabel htmlFor="notes">附注</FieldLabel>
          <button aria-label="help" className="-mr-1">
            <HelpIcon />
          </button>
        </div>
        <div className="ml-2.5 flex h-[103px] flex-1 border border-[#7f9db9] bg-white pr-0.5">
          <textarea id="notes" defaultValue={memo} className="min-w-0 flex-1 resize-none overflow-hidden px-0.5 pt-[3px] text-[12px] leading-[13px]" />
          <VScroll disabled />
        </div>
      </div>
    </div>
  );
}

function Group({ title, className = "", children }) {
  return (
    <fieldset className={`min-w-0 rounded-sm border border-[#d0d0bf] ${className}`}>
      <legend className="px-0.5 leading-[14px] whitespace-nowrap text-[#0046d5]">{title}</legend>
      {children}
    </fieldset>
  );
}

function Combo({ label, value }) {
  return (
    <div className="relative h-[21px]">
      <select aria-label={label} disabled className="block h-full w-full appearance-none border border-[#c9c7ba] bg-white pl-1 text-[11px] text-[#a5a294]">
        <option>{value}</option>
      </select>
      <span className="pointer-events-none absolute top-0.5 right-0.5 flex h-[17px] w-[15px] items-center justify-center bg-[#efeee6]">
        <Chevron color="#c6c4b8" />
      </span>
    </div>
  );
}

function EqSlider({ label }) {
  return (
    <div className="flex">
      <div className="relative h-[78px] w-[15px]">
        <input
          type="range"
          aria-label={label}
          disabled
          className="h-full w-full appearance-none border border-[#a5a294] border-r-white border-b-white bg-[#f0efe8] [writing-mode:vertical-lr] [&::-webkit-slider-thumb]:opacity-0"
        />
        <svg width="17" height="9" viewBox="0 0 17 9" className="pointer-events-none absolute top-[34px] left-0" aria-hidden="true">
          <path d="M.5.500h11l4 4-4 4H.5z" fill="#f5f4ee" stroke="#c3c1b4" />
        </svg>
      </div>
      <div className="flex h-[78px] w-[17px] flex-col justify-between py-1 pl-[5px]">
        <span className="h-px w-1 bg-[#8f8c80]" />
        <span className="h-px w-1 bg-[#8f8c80]" />
        <span className="h-px w-1 bg-[#8f8c80]" />
      </div>
    </div>
  );
}

const bands = ["32", "60", "125", "250", "500", "1K", "2K", "4K", "8K", "16K"];

function SoundPanel() {
  return (
    <div className="min-w-0 flex-1 pt-[7px] pr-[9px] pl-[15px]">
      <div className="flex justify-between">
        <Group title="左" className="px-2 pb-1.5">
          <div className="mt-0.5 flex h-[60px] w-[101px] items-center bg-black">
            <span className="h-px w-full bg-[#4c4c4c]" />
          </div>
        </Group>
        <Group title="声谱" className="px-2 pb-1.5">
          <div className="mt-0.5 flex h-[60px] w-[141px] items-end gap-0.5 bg-black px-px">
            {Array.from({ length: 10 }, (_, i) => (
              <span key={i} className="h-px flex-1 bg-[#ffff66]" />
            ))}
          </div>
        </Group>
        <Group title="右" className="px-2 pb-1.5">
          <div className="mt-0.5 flex h-[60px] w-[101px] items-center bg-black">
            <span className="h-px w-full bg-[#4c4c4c]" />
          </div>
        </Group>
      </div>
      <Group title="RSE 处理音效 (对所有音轨适用)" className="mt-[7px] px-2.5 pb-[15px]">
        <div className="flex gap-1.5 pt-px">
          <Group title="主音量" className="h-[58px] w-[161px] px-3">
            <div className="relative mt-2.5 h-4 w-[132px]">
              <input
                type="range"
                aria-label="主音量"
                disabled
                defaultValue="8"
                className="block h-full w-full appearance-none border border-[#a5a294] border-r-white border-b-white bg-[#f0efe8] [&::-webkit-slider-thumb]:opacity-0"
              />
              <svg width="9" height="17" viewBox="0 0 9 17" className="pointer-events-none absolute top-0 left-2" aria-hidden="true">
                <path d="M.5.500h8v11l-4 4-4-4z" fill="#f5f4ee" stroke="#c3c1b4" />
              </svg>
            </div>
            <div className="mt-1 flex w-[129px] justify-between pl-1">
              {Array.from({ length: 11 }, (_, i) => (
                <span key={i} className={i === 5 ? "mt-0.5 h-1.5 w-px bg-black" : "h-1 w-px bg-[#a5a294]"} />
              ))}
            </div>
          </Group>
          <Group title="主混响" className="h-[58px] flex-1 px-[11px]">
            <div className="mt-2.5">
              <Combo label="主混响" value="None" />
            </div>
          </Group>
        </div>
        <Group title="10段 EQ" className="mt-[9px] px-3 pb-3">
          <div className="mt-1 flex h-[116px]">
            {bands.map((b) => (
              <div key={b} className="w-8 shrink-0 text-[11px]">
                <div className="-ml-1 h-[22px] w-6 text-center leading-[19px]">{b}</div>
                <EqSlider label={b} />
                <div className="pl-0.5 leading-[22px]">0.0</div>
              </div>
            ))}
            <div className="-ml-1.5 w-7 shrink-0 text-[11px]">
              <div className="h-[22px] text-center leading-[19px]">(Hz)</div>
              <button disabled className="mt-[29px] ml-1 h-[19px] w-6 rounded-sm border border-[#c9c7ba] text-[#a5a294]">
                0
              </button>
            </div>
            <div className="w-9 shrink-0 pl-1">
              <div className="flex h-[22px] w-[30px] justify-center overflow-hidden leading-[19px] whitespace-nowrap">
                <span>预放大</span>
              </div>
              <div className="pl-1.5">
                <EqSlider label="预放大" />
              </div>
            </div>
          </div>
          <div className="mt-2.5 w-[304px]">
            <Combo label="预设" value="" />
          </div>
        </Group>
      </Group>
    </div>
  );
}

function InfoDialog() {
  const tab = "h-[19px] rounded-t-xs border border-b-0 border-[#919b9c] bg-linear-to-b from-white to-[#efeee6] text-[12px] leading-4 whitespace-nowrap";
  return (
    <section role="dialog" aria-label="谱表信息" className="absolute top-[184px] left-[303px] flex w-[827px] flex-col rounded-t-lg border-x-[3px] border-b-4 border-[#7b8bdc] border-b-[#5a5fc0] border-r-[#5560c4] bg-[#ece9d8] text-[12px]">
      <header className="-mx-[3px] flex h-[29px] items-center justify-between rounded-t-md bg-linear-to-b from-[#8aaaf0] via-[#7a94de] to-[#82a6ea] pr-1.5 pl-2">
        <h2 className="text-[13px] font-bold text-[#dbe6fb]">谱表信息</h2>
        <button aria-label="close dialog" className="flex h-[19px] w-[19px] items-center justify-center rounded-xs border border-[#e6dcf0] bg-[#b9697c]">
          <CloseMark />
        </button>
      </header>
      <div className="pt-2 pr-2.5 pb-2 pl-[9px]">
        <div className="flex items-end">
          <button className="relative z-10 -mb-px h-[21px] w-[63px] rounded-t-xs border border-t-2 border-b-0 border-[#919b9c] border-t-[#efa82c] bg-[#fcfcfe] pb-0.5 leading-4">谱表信息</button>
          <button className={`${tab} w-10 text-[11px]`}>Lyrics</button>
          <button className={`${tab} ml-0.5 w-[58px]`}>内定信息</button>
        </div>
        <div className="flex h-[391px] border border-[#919b9c] bg-linear-to-b from-[#fcfcfe] to-[#f3f2ec]">
          <InfoForm />
          <SoundPanel />
        </div>
        <div className="-mr-px mt-[11px] flex justify-end gap-[9px]">
          <button className="flex h-6 w-[95px] items-center justify-center gap-1 rounded-sm border border-[#003c74] bg-white shadow-[inset_0_0_0_2px_#bcd3f5]">
            <svg width="18" height="14" viewBox="0 0 18 14" aria-hidden="true">
              <path d="M2 7l5 5L16 2" fill="none" stroke="#2e8b2a" strokeWidth="2.200" />
            </svg>
            <span>确定(<u>O</u>)</span>
          </button>
          <button className="flex h-6 w-[95px] items-center justify-center gap-1 rounded-sm border border-[#003c74] bg-linear-to-b from-white to-[#f0efe8]">
            <svg width="18" height="16" viewBox="0 0 18 16" aria-hidden="true">
              <path d="M2 2l13 12M14 2L3 14" stroke="#d9391c" strokeWidth="2.200" />
            </svg>
            <span>取消(<u>C</u>)</span>
          </button>
        </div>
      </div>
    </section>
  );
}

// ---------- score area ----------

function ScoreArea() {
  return (
    <main className="flex min-h-80 flex-1 border-t border-[#aca899]">
      <div className="flex flex-1 bg-[#aca899]">
        <div className="ml-[411px] flex w-[595px] items-end border-x border-black bg-white">
          <svg width="593" height="14" viewBox="0 0 593 14" fill="none" aria-hidden="true">
            <path d="M27.500 0v14" stroke="#000" />
            <ellipse cx="42" cy="3" rx="3.500" ry="2" fill="#000" />
            <path d="M123 5.500h10M124 9.500h8M128.500 2v12M170 5.500h9M484 5.500h10M545 5.500h0" stroke="#555" />
            <ellipse cx="128" cy="3" rx="3.500" ry="2" fill="#000" />
            <path d="M189.500 4v6M190 4h4v3M232 4l21 5V2M448 4v4l19-2M545.500 4v6M546 4h3" stroke="#bbb" />
            <ellipse cx="489" cy="5" rx="4" ry="2.500" fill="#000" />
          </svg>
        </div>
      </div>
      <VScroll>
        <div className="mx-px mt-20 flex h-[51px] flex-col items-center justify-center gap-px rounded-xs border border-[#9db5ee] bg-[#c6d5fd]">
          {[0, 1, 2, 3].map((i) => (
            <span key={i} className="h-px w-1.5 bg-[#8ea6e0]" />
          ))}
        </div>
      </VScroll>
    </main>
  );
}

function SpeedWidget() {
  return (
    <aside className="absolute top-[455px] right-3 flex w-[125px] items-center font-['Liberation_Sans',sans-serif]">
      <div className="relative z-10 flex h-12 w-12 items-center justify-center rounded-full border-[3px] border-[#dcdcd2] bg-linear-to-b from-[#4c8a68] from-45% to-[#72c078] to-45% text-[14px] text-[#e2f4dc] shadow-md">
        56%
      </div>
      <div className="-ml-6 flex h-[38px] flex-1 items-center rounded-r-full border border-[#c4c1b6] bg-[#d2cfc6] pl-6 text-[10px] leading-[15px] text-[#222] shadow-md">
        <svg width="8" height="24" viewBox="0 0 8 24" fill="none" className="ml-0.5" aria-hidden="true">
          <path d="M4 8V1M1.500 4L4 1l2.500 3" stroke="#e0685c" strokeWidth="1.600" />
          <path d="M4 16v7M1.500 20L4 23l2.500-3" stroke="#4c9a74" strokeWidth="1.600" />
        </svg>
        <div className="flex-1 pr-1 text-right">
          0K/s
          <br />
          0K/s
        </div>
        <svg width="20" height="20" viewBox="0 0 20 20" className="mr-0.5" aria-hidden="true">
          <circle cx="9" cy="11" r="8" fill="#5e93cf" />
          <path d="M9 6v10M4 11h10" stroke="#dbe9f6" strokeWidth="2" />
          <circle cx="15" cy="5" r="4" fill="#e2603f" />
        </svg>
      </div>
    </aside>
  );
}

function EffectBar() {
  return (
    <div className="mt-px flex">
      <Toolbar>
        <Items list={["dead", "grace", "ghost", "accent", "heavy", "ring", "nh", "ah", "|", "ho", "bend", "trem", "sl1", "sl2", "sl3", "vg", "vib", "vib2", "|", "tr", "trpk", "vg", "pm", "stac", "||", "T", "S", "P", "|", "fade", "wah", "v"]} />
      </Toolbar>
      <Toolbar className="pl-2">
        <Items list={["chord", "TXT", "mix", "|", "hand1", "vg", "hand2", "vg", "|", "up", "down", "|", "pickU", "pickD"]} />
      </Toolbar>
    </div>
  );
}

function Splitter() {
  return (
    <div className="flex h-[9px] justify-center border-b border-[#aca899]">
      <div className="flex h-2 w-[575px] items-center gap-1.5 border border-[#aca899] bg-[#f4f3ea] px-1.5">
        <svg width="6" height="3" viewBox="0 0 6 3" aria-hidden="true"><path d="M0 0h6L3 3z" fill="#3d5f9c" /></svg>
        <span className="flex-1 border-t border-dotted border-[#8f8c80]" />
        <svg width="6" height="3" viewBox="0 0 6 3" aria-hidden="true"><path d="M0 0h6L3 3z" fill="#3d5f9c" /></svg>
      </div>
    </div>
  );
}

// ---------- tracks ----------

const tracks = [
  { name: "Steel Guitar", port: 1, ch: 1, ch2: 2, instrument: "25 - Acoustic Guitar (steel)", volume: 16, first: 1, color: "bg-linear-to-b from-[#ff5f33] via-[#f55028] to-[#a5391f]" },
  { name: "贝斯", port: 1, ch: 3, ch2: 4, instrument: "46 - Orchestral Harp", volume: 10, first: 9, color: "bg-[#ff0000]" },
  { name: "架子鼓", port: 1, ch: 10, ch2: 10, instrument: "0 - 鼓组 0", volume: 16, first: 9, color: "bg-[#0000ff]" },
];

const selected = "bg-linear-to-b from-white via-[#ebe9e0] to-[#a19d8f]";

function MiniSlider({ label, value, left, min, color }) {
  return (
    <div className="relative mx-auto flex h-[18px] w-14 items-center">
      <input
        type="range"
        aria-label={label}
        min={min}
        max={-min || 16}
        defaultValue={value}
        className={`h-1 w-full appearance-none border-b border-[#aca899] [&::-webkit-slider-thumb]:opacity-0 ${color}`}
      />
      <span
        className="pointer-events-none absolute top-[3px] flex h-[13px] w-[15px] items-center justify-center border border-black bg-[#dedbd0] text-[9px]"
        style={{ left }}
      >
        {value}
      </span>
    </div>
  );
}

function TrackTable() {
  const cell = "h-5 overflow-hidden border-r border-b border-r-[#aca899] border-b-[#aca899] border-t border-t-white p-0";
  return (
    <table className="w-[562px] table-fixed border-separate border-spacing-0 text-center text-[11px] leading-4">
      <colgroup>
        <col className="w-7" />
        <col className="w-[77px]" />
        <col className="w-[33px]" />
        <col className="w-[22px]" />
        <col className="w-6" />
        <col className="w-[22px]" />
        <col className="w-[142px]" />
        <col className="w-[69px]" />
        <col className="w-[69px]" />
        <col className="w-[23px]" />
        <col className="w-[23px]" />
        <col className="w-6" />
        <col />
      </colgroup>
      <thead>
        <tr className="h-[27px] text-[13px] whitespace-nowrap [&>th]:overflow-hidden [&>th]:border-b [&>th]:border-[#aca899] [&>th]:p-0 [&>th]:pt-1.5 [&>th]:font-normal">
          <th className="text-[11px]">&lt; &nbsp;&gt;</th>
          <th>名称</th>
          <th className="text-[12px]">S M</th>
          <th className="text-[12px]">
            <span className="flex justify-end">端口</span>
          </th>
          <th className="text-[12px]">Ch</th>
          <th className="text-[12px]">Ch2</th>
          <th>乐器</th>
          <th>音量</th>
          <th>左右平衡</th>
          <th>和</th>
          <th>回</th>
          <th>相</th>
          <th>颤</th>
        </tr>
      </thead>
      <tbody>
        {tracks.map((t, i) => (
          <tr key={t.name} className={`whitespace-nowrap ${i === 0 ? "[&>td]:bg-linear-to-b [&>td]:from-white [&>td]:via-[#ebe9e0] [&>td]:to-[#a19d8f]" : ""}`}>
            <td className={`${cell} text-[12px] font-bold`}>{i + 1}</td>
            <td className={`${cell} pl-[5px] text-left font-bold ${i === 0 ? "text-[12px]" : "text-[14px]"}`}>{t.name}</td>
            <td className={cell}>
              <button className="h-3.5 w-3 border border-white text-[10px] leading-3 font-bold text-white">S</button>
              <button className="h-3.5 w-3 border border-white text-[10px] leading-3 font-bold text-white">M</button>
            </td>
            <td className={cell}>{t.port}</td>
            <td className={cell}>{t.ch}</td>
            <td className={cell}>{t.ch2}</td>
            <td className={`${cell} pl-1 text-left`}>{t.instrument}</td>
            <td className={cell}>
              <MiniSlider label={`${t.name} 音量`} value={t.volume} min={0} left={t.volume * 3 - 4} color={t.volume > 12 ? "bg-[#d40000]" : "bg-[#e09010]"} />
            </td>
            <td className={cell}>
              <MiniSlider label={`${t.name} 左右平衡`} value={0} min={-8} left={21} color="bg-[#dede00]" />
            </td>
            <td className={cell}>0</td>
            <td className={cell}>0</td>
            <td className={cell}>0</td>
            <td className={cell} />
          </tr>
        ))}
      </tbody>
    </table>
  );
}

const bars = Array.from({ length: 40 }, (_, i) => i + 1);

function BarTable() {
  const filled = "border-t border-r border-b border-t-[#f4f0e4] border-r-[#e4dccb] border-b-[#d9d0c0]";
  const empty = "border-t border-r border-b border-t-white border-r-[#aca899] border-b-[#aca899]";
  return (
    <table className="w-full table-fixed border-separate border-spacing-0 border-l border-[#aca899] text-center">
      <thead>
        <tr className="h-[27px]">
          {bars.map((b) => (
            <th key={b} className="w-5 border-b border-[#aca899] p-0 pr-1 align-bottom text-[9px] leading-3 font-normal">{b}</th>
          ))}
          <th className="border-r border-b border-[#aca899]" />
        </tr>
      </thead>
      <tbody>
        {tracks.map((t, i) => (
          <tr key={t.name} className="h-5">
            {bars.map((b) => (
              <td key={b} className={`h-5 p-0 ${b >= t.first ? `${filled} ${t.color}` : empty}`}>
                {i === 0 && b === 22 && <span className="mx-auto block h-3 w-3 border border-white bg-black" />}
              </td>
            ))}
            <td className={`border-r border-b border-[#aca899] p-0 ${i === 0 ? selected : ""}`} />
          </tr>
        ))}
      </tbody>
    </table>
  );
}

function TrackArea() {
  return (
    <div className="flex border-b border-[#aca899] pb-0.5">
      <div className="w-[562px] shrink-0">
        <TrackTable />
        <HScroll className="mt-px">
          <div className="ml-px flex h-4 w-[46px] items-center justify-center gap-px rounded-xs border border-[#9db5ee] bg-[#c6d5fd]">
            {[0, 1, 2, 3].map((i) => (
              <span key={i} className="h-1.5 w-px bg-[#8ea6e0]" />
            ))}
          </div>
        </HScroll>
      </div>
      <div className="flex w-2.5 shrink-0 flex-col items-center pt-[31px]">
        <div className="flex h-[41px] w-[7px] flex-col items-center justify-between border border-[#aca899] bg-[#f4f3ea] py-1">
          <svg width="3" height="6" viewBox="0 0 3 6" aria-hidden="true"><path d="M3 0v6L0 3z" fill="#1a5c96" /></svg>
          <span className="h-3 border-l border-dotted border-[#8f8c80]" />
          <svg width="3" height="6" viewBox="0 0 3 6" aria-hidden="true"><path d="M3 0v6L0 3z" fill="#1a5c96" /></svg>
        </div>
      </div>
      <div className="min-w-0 flex-1">
        <BarTable />
        <HScroll disabled className="mt-px" />
      </div>
      <div className="flex w-4 flex-col">
        <div className="flex h-[88px]">
          <VScroll disabled />
        </div>
        <ZoomButton />
      </div>
    </div>
  );
}

function StatusBar() {
  const cell = "flex h-4 items-center border border-[#aca899] border-r-white border-b-white px-0.5 whitespace-nowrap";
  return (
    <footer className="flex gap-0.5 pt-px text-[11px]">
      <div className={`${cell} w-[53px]`}>Page 2/3</div>
      <div className={`${cell} w-[57px] justify-center`}>022 : 040</div>
      <div className={`${cell} w-[93px] justify-end text-[13px]`}>
        <span className="h-3.5 w-3.5 rounded-full bg-radial-[at_35%_30%] from-[#7dff6a] to-[#08b408]" />
        小节已完成
      </div>
      <div className={`${cell} w-[65px] justify-center`}>Steel Guitar</div>
      <div className={`${cell} w-[74px] justify-center`}>4.000 : 4.000</div>
      <div className={`${cell} flex-1 justify-center text-[13px]`}>斑马斑马 - 宋冬野</div>
    </footer>
  );
}

export default function App() {
  return (
    <div className="relative flex min-h-screen flex-col overflow-hidden bg-[#ece9d8] font-['Roboto','Noto_Sans_CJK_SC',sans-serif] text-black">
      <TitleBar />
      <MenuBar />
      <Toolbars />
      <InstrumentPanels />
      <ScoreArea />
      <div className="flex">
        <HScroll disabled className="flex-1" />
        <ZoomButton />
      </div>
      <EffectBar />
      <Splitter />
      <TrackArea />
      <StatusBar />
      <div className="flex h-1 bg-[#2f6ee0]">
        <span className="w-[91px] rounded-r-sm bg-[#3f9a3f]" />
        <span className="flex-1" />
        <span className="w-[74px] border-l border-[#0a4a90] bg-[#18a0ee]" />
      </div>
      <InfoDialog />
      <SpeedWidget />
    </div>
  );
}
